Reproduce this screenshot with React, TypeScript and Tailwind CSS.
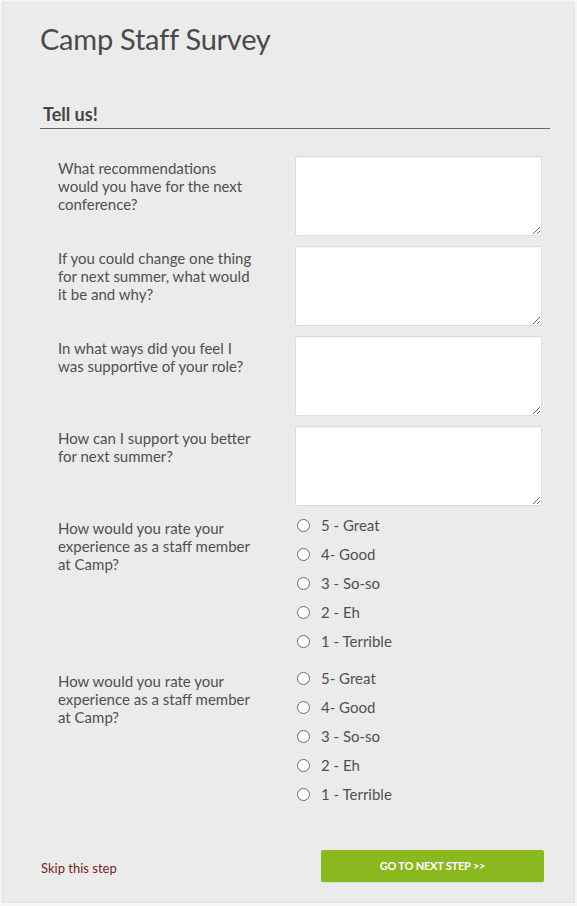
import React from "react";

const textQuestions = [
  "What recommendations would you have for the next conference?",
  "If you could change one thing for next summer, what would it be and why?",
  "In what ways did you feel I was supportive of your role?",
  "How can I support you better for next summer?",
];

const radioGroups = [
  ["5 - Great", "4- Good", "3 - So-so", "2 - Eh", "1 - Terrible"],
  ["5- Great", "4- Good", "3 - So-so", "2 - Eh", "1 - Terrible"],
];

export default function App() {
  return (
    <div
      className="w-[577px] h-[906px] bg-[#f5f5f5] p-[2px] pb-[3px]"
      style={{ fontFamily: "Lato, 'Open Sans', sans-serif" }}
    >
      <div className="h-full bg-[#ebebeb] border border-[#e2e2e2] rounded-[2px] pl-[37px] pr-[24px]">
        <h1 className="pt-[18px] text-[29px] leading-[36px] text-[#4a4a4a] font-normal tracking-[-0.25px]">
          Camp Staff Survey
        </h1>
        <div className="mt-[45px] border-b border-[#5d6873] pb-[2px] pl-[3px]">
          <h2 className="text-[18px] leading-[24px] font-bold text-[#444]">Tell us!</h2>
        </div>
        <div className="mt-[27px] flex flex-col gap-[10px] pl-[18px] pr-[8px]">
          {textQuestions.map((q) => (
            <div key={q} className="flex">
              <div className="w-[237px] shrink-0 pt-[3px]">
                <p className="w-[200px] text-[15px] leading-[18px] text-[#505050]">{q}</p>
              </div>
              <textarea className="w-[247px] h-[80px] bg-white border border-[#dcdcdc] rounded-[2px] shadow-[inset_0_1px_1px_rgba(0,0,0,0.04)] resize-y outline-none" />
            </div>
          ))}
          {radioGroups.map((opts, gi) => (
            <div key={gi} className="flex">
              <div className="w-[237px] shrink-0 pt-[3px]">
                <p className="w-[200px] text-[15px] leading-[18px] text-[#505050]">
                  How would you rate your experience as a staff member at Camp?
                </p>
              </div>
              <div className="flex flex-col gap-[11px] pb-[9px]">
                {opts.map((o) => (
                  <label key={o} className="flex items-center h-[18px]">
                    <span className="ml-[2px] w-[13px] h-[13px] rounded-full border border-[#6a6a6a] bg-white shrink-0" />
                    <span className="ml-[11px] text-[15px] leading-[18px] text-[#505050]">{o}</span>
                  </label>
                ))}
              </div>
            </div>
          ))}
        </div>
        <div className="mt-[38px] flex items-center justify-between pl-[1px] pr-[6px]">
          <a className="block pt-[3px] text-[13px] leading-[18px] text-[#7a1c1c]">Skip this step</a>
          <button className="w-[223px] h-[32px] bg-[#89b91e] rounded-[2px] text-white text-[11px] font-bold tracking-[-0.2px] shadow-[0_1px_1px_rgba(0,0,0,0.08)]">
            GO TO NEXT STEP &gt;&gt;
          </button>
        </div>
      </div>
    </div>
  );
}
